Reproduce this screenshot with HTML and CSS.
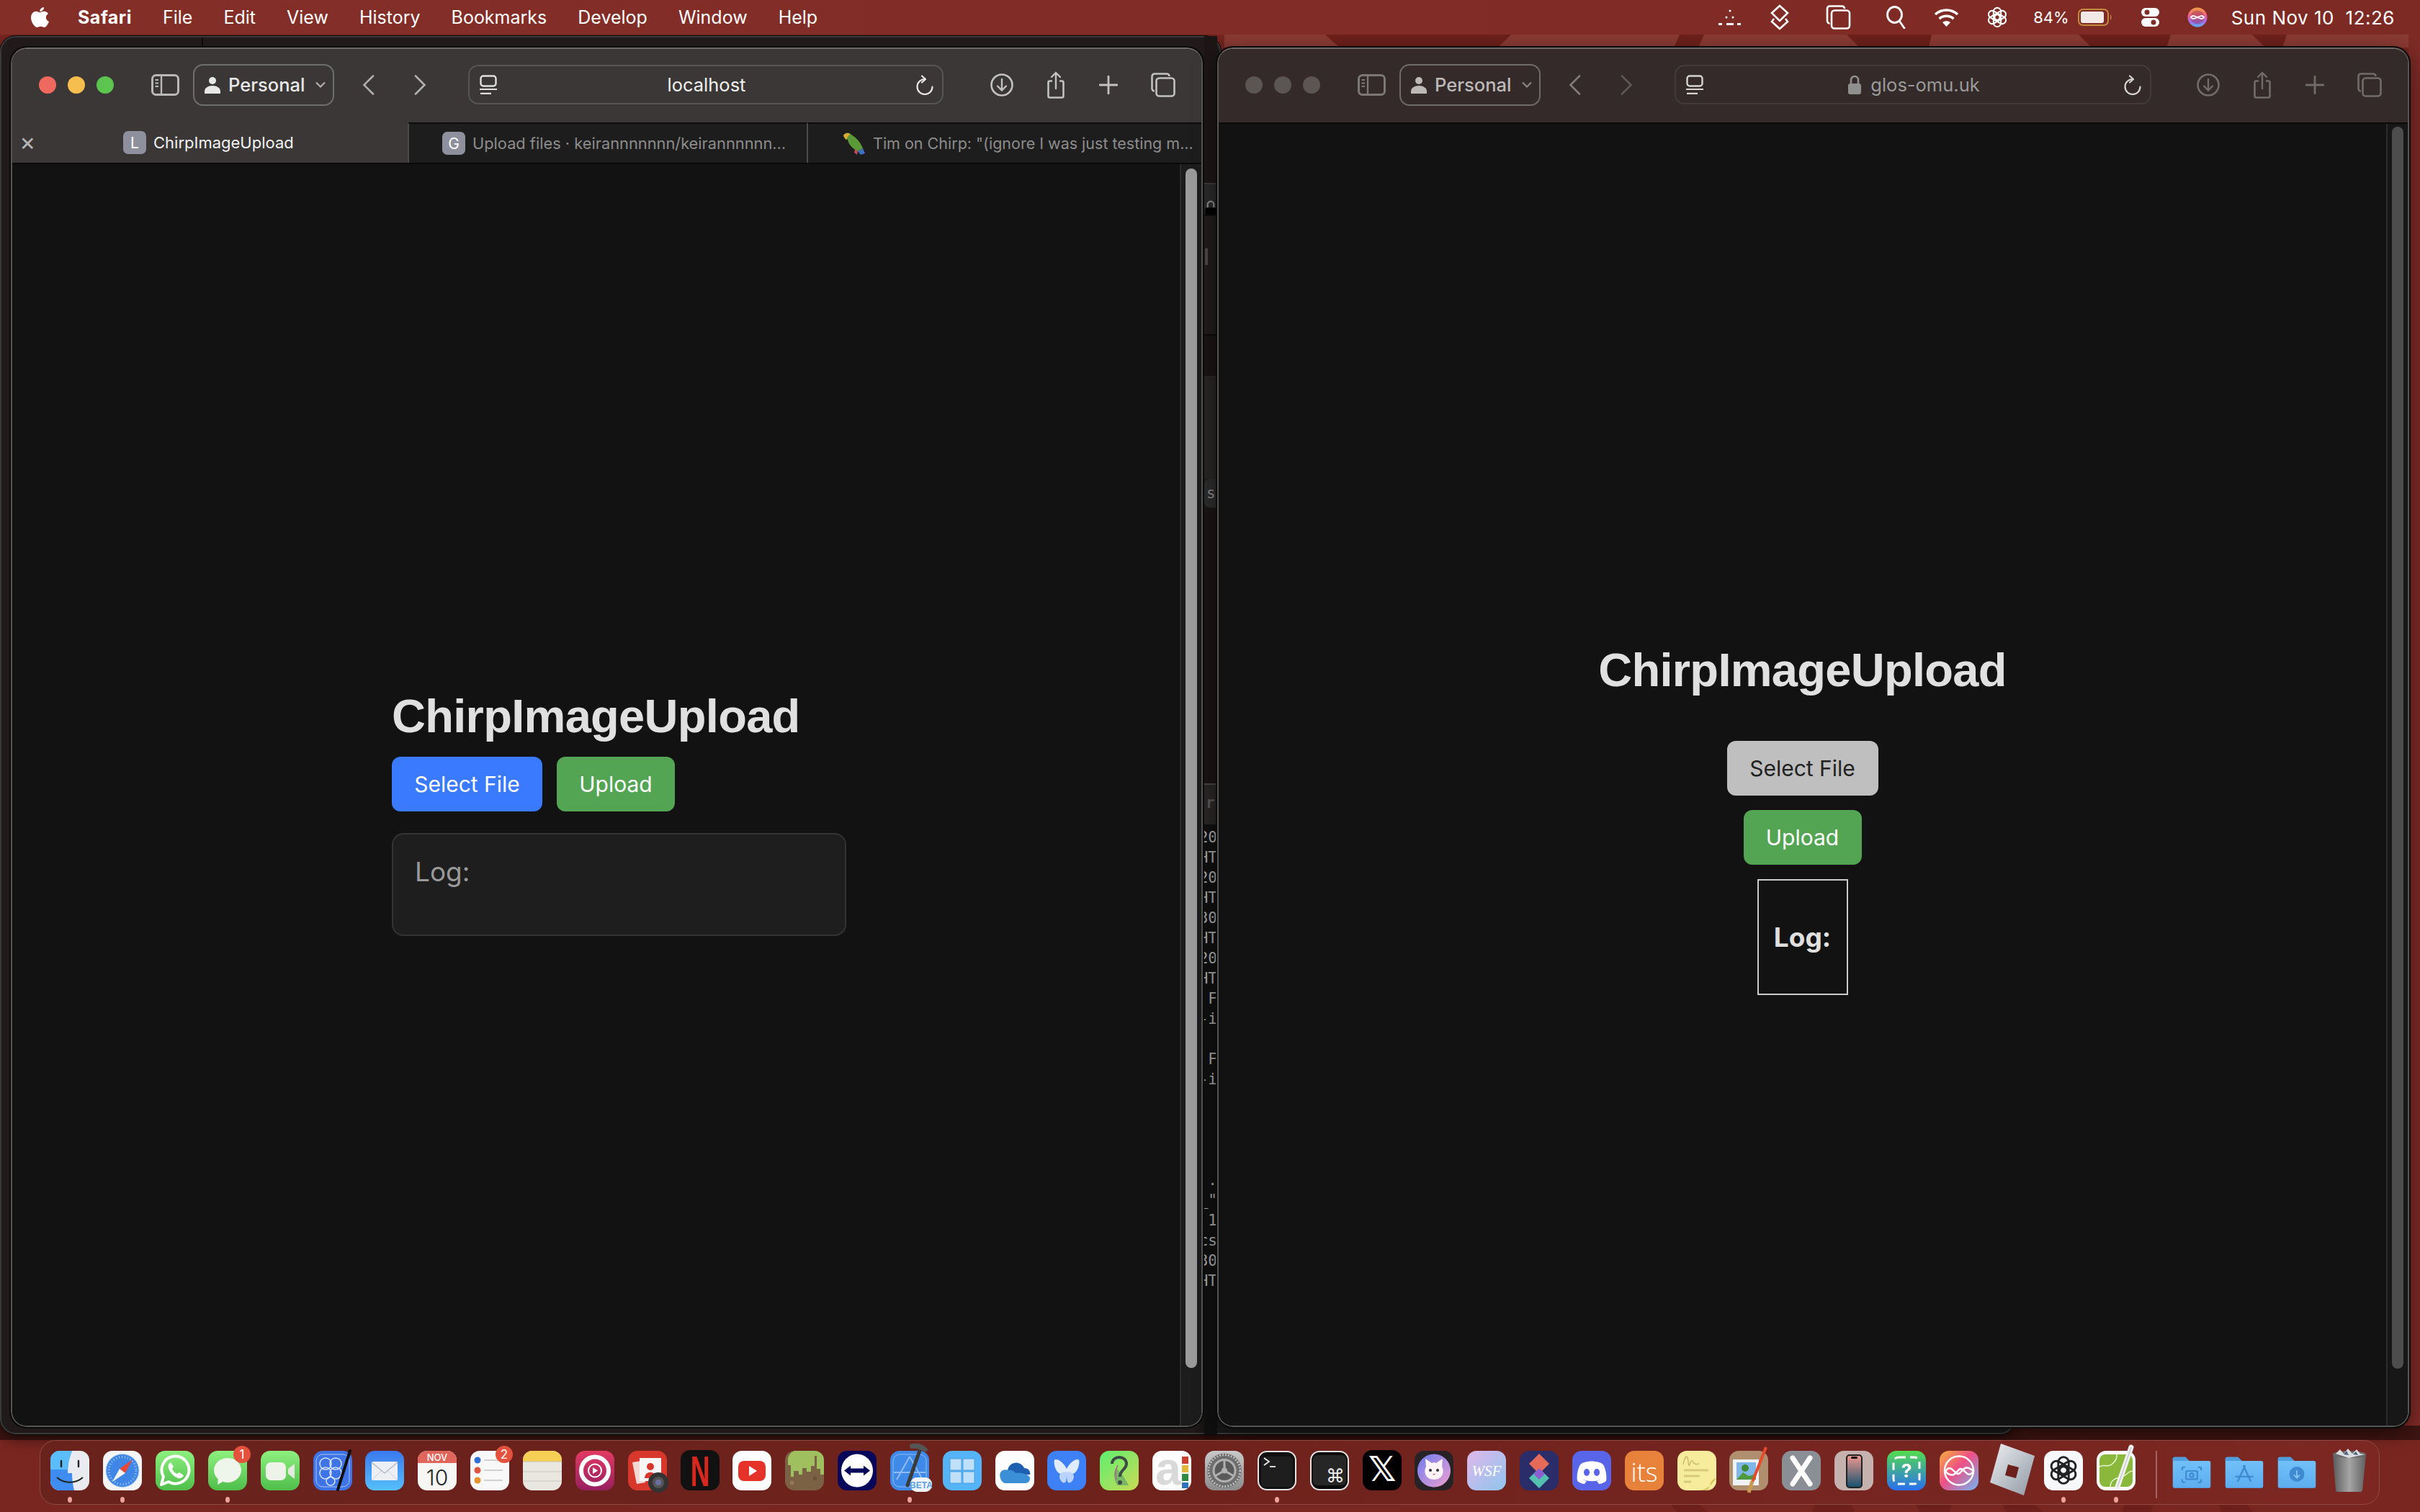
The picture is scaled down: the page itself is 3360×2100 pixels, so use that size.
FILE: index.html
```html
<!DOCTYPE html>
<html lang="en">
<head>
<meta charset="utf-8">
<title>ChirpImageUpload</title>
<link rel="stylesheet" href="styles.css">
</head>
<body class="desktop">

<svg class="sprite" width="0" height="0" aria-hidden="true">
  <defs>
    <linearGradient id="gGreen" x1="0" y1="0" x2="0" y2="1"><stop offset="0" stop-color="#8df07f"/><stop offset="1" stop-color="#4fbe4a"/></linearGradient>
    <linearGradient id="gBlue" x1="0" y1="0" x2="0" y2="1"><stop offset="0" stop-color="#3a78ee"/><stop offset="1" stop-color="#55c0fb"/></linearGradient>
    <linearGradient id="gPink" x1="0" y1="0" x2="0" y2="1"><stop offset="0" stop-color="#e23a63"/><stop offset="1" stop-color="#96205f"/></linearGradient>
    <linearGradient id="gParrot" x1="0" y1="0" x2="1" y2="1"><stop offset="0" stop-color="#5df070"/><stop offset="1" stop-color="#c9d955"/></linearGradient>
    <linearGradient id="gGear" x1="0" y1="0" x2="0" y2="1"><stop offset="0" stop-color="#c9c9c9"/><stop offset="1" stop-color="#8c8c8c"/></linearGradient>
    <linearGradient id="gCat" x1="0" y1="0" x2="1" y2="1"><stop offset="0" stop-color="#6d7cf0"/><stop offset="1" stop-color="#f0a0d0"/></linearGradient>
    <linearGradient id="gWsf" x1="0" y1="0" x2="1" y2="1"><stop offset="0" stop-color="#e0b8ea"/><stop offset="1" stop-color="#8ec5ee"/></linearGradient>
    <linearGradient id="gTips" x1="0" y1="0" x2="0" y2="1"><stop offset="0" stop-color="#54dc4e"/><stop offset="1" stop-color="#2a6ff0"/></linearGradient>
    <linearGradient id="gInf" x1="0" y1="0" x2="1" y2="1"><stop offset="0" stop-color="#f5b03c"/><stop offset=".45" stop-color="#ee4f86"/><stop offset="1" stop-color="#6fb8f5"/></linearGradient>
    <linearGradient id="gSiri" x1="0" y1="0" x2="0" y2="1"><stop offset="0" stop-color="#f0a040"/><stop offset=".4" stop-color="#ee5f8a"/><stop offset=".75" stop-color="#a070f0"/><stop offset="1" stop-color="#50b8f5"/></linearGradient>
    <linearGradient id="gRoblox" x1="0" y1="0" x2="1" y2="1"><stop offset="0" stop-color="#eef0f3"/><stop offset="1" stop-color="#8e97a3"/></linearGradient>
    <linearGradient id="gFolder" x1="0" y1="0" x2="0" y2="1"><stop offset="0" stop-color="#74c3fa"/><stop offset="1" stop-color="#5cadf0"/></linearGradient>
    <linearGradient id="gTrash" x1="0" y1="0" x2="1" y2="0"><stop offset="0" stop-color="#5a5a5a"/><stop offset=".5" stop-color="#a5a5a5"/><stop offset="1" stop-color="#5f5f5f"/></linearGradient>
    <linearGradient id="gPhone" x1="0" y1="0" x2="0" y2="1"><stop offset="0" stop-color="#f49a8e"/><stop offset="1" stop-color="#14506e"/></linearGradient>
    <symbol id="knot" viewBox="0 0 32 32">
      <g fill="none" stroke="currentColor" stroke-width="2.200">
        <rect x="10.500" y="2" width="11" height="18" rx="5.500"/>
        <rect x="10.500" y="2" width="11" height="18" rx="5.500" transform="rotate(60 16 16)"/>
        <rect x="10.500" y="2" width="11" height="18" rx="5.500" transform="rotate(120 16 16)"/>
        <rect x="10.500" y="2" width="11" height="18" rx="5.500" transform="rotate(180 16 16)"/>
        <rect x="10.500" y="2" width="11" height="18" rx="5.500" transform="rotate(240 16 16)"/>
        <rect x="10.500" y="2" width="11" height="18" rx="5.500" transform="rotate(300 16 16)"/>
      </g>
    </symbol>
    <symbol id="i-sidebar" viewBox="0 0 39 30">
      <rect x="1.500" y="1.500" width="36" height="27" rx="5" fill="none" stroke="currentColor" stroke-width="3"/>
      <path d="M14 2v26" stroke="currentColor" stroke-width="2.400"/>
      <path d="M5.500 8h4.500M5.500 12.500h4.500M5.500 17h4.500" stroke="currentColor" stroke-width="1.800"/>
    </symbol>
    <symbol id="i-person" viewBox="0 0 22 24">
      <circle cx="11" cy="6" r="5"/>
      <path d="M0 24v-3c0-5 5-8 11-8s11 3 11 8v3z"/>
    </symbol>
    <symbol id="i-caret" viewBox="0 0 14 9"><path d="M1 1.500 7 7.500l6-6" fill="none" stroke="currentColor" stroke-width="2.200"/></symbol>
    <symbol id="i-back" viewBox="0 0 17 28"><path d="M15 1.500 2.500 14 15 26.500" fill="none" stroke="currentColor" stroke-width="2.600" stroke-linecap="round"/></symbol>
    <symbol id="i-forward" viewBox="0 0 17 28"><path d="M2 1.500 14.500 14 2 26.500" fill="none" stroke="currentColor" stroke-width="2.600" stroke-linecap="round"/></symbol>
    <symbol id="i-page" viewBox="0 0 24 27">
      <rect x="1.500" y="1.500" width="21" height="14" rx="3.500" fill="none" stroke="currentColor" stroke-width="2.400"/>
      <path d="M0 20h24" stroke="currentColor" stroke-width="2"/>
      <path d="M1 26h15" stroke="currentColor" stroke-width="2.400"/>
    </symbol>
    <symbol id="i-reload" viewBox="0 0 24 28">
      <path d="M22.500 16.500A10.500 10.500 0 1 1 12 6" fill="none" stroke="currentColor" stroke-width="2.200" stroke-linecap="round"/>
      <path d="M8 1.500l5 4.500-5 4.500" fill="none" stroke="currentColor" stroke-width="2.200" stroke-linecap="round" stroke-linejoin="round"/>
    </symbol>
    <symbol id="i-download" viewBox="0 0 32 32">
      <circle cx="16" cy="16" r="14.500" fill="none" stroke="currentColor" stroke-width="2.600"/>
      <path d="M16 8v15M10 17.500l6 6 6-6" fill="none" stroke="currentColor" stroke-width="2.400" stroke-linecap="round"/>
    </symbol>
    <symbol id="i-share" viewBox="0 0 24 38">
      <path d="M7 13.500H3.500a2 2 0 0 0-2 2v19a2 2 0 0 0 2 2h17a2 2 0 0 0 2-2v-19a2 2 0 0 0-2-2H17" fill="none" stroke="currentColor" stroke-width="2.600"/>
      <path d="M12 24V2M6 8l6-6 6 6" fill="none" stroke="currentColor" stroke-width="2.400" stroke-linecap="round"/>
    </symbol>
    <symbol id="i-plus" viewBox="0 0 26 26"><path d="M13 1v24M1 13h24" stroke="currentColor" stroke-width="2.800" stroke-linecap="round"/></symbol>
    <symbol id="i-tabs" viewBox="0 0 34 34">
      <path d="M5 25.500H5a3.500 3.500 0 0 1-3.500-3.500V5A3.500 3.500 0 0 1 5 1.500h17A3.500 3.500 0 0 1 25.500 5" fill="none" stroke="currentColor" stroke-width="2.600"/>
      <rect x="7.500" y="7.500" width="25" height="25" rx="4" fill="none" stroke="currentColor" stroke-width="2.600"/>
    </symbol>
    <symbol id="i-lock" viewBox="0 0 20 28">
      <path d="M5 13V7a5 5 0 0 1 10 0v6" fill="none" stroke="currentColor" stroke-width="2.600"/>
      <rect x="1" y="12" width="18" height="15" rx="3"/>
    </symbol>
  </defs>
</svg>

<svg class="wallpaper" viewBox="0 0 3360 2100" aria-hidden="true">
  <rect width="3360" height="2100" fill="#7a2620"/>
  <rect x="1700" y="48" width="1660" height="18" fill="#8a3a34"/>
  <rect x="3344" y="48" width="16" height="1950" fill="#7e2a25"/>
  <g fill="#6d201b">
    <path d="M1840 48h258l-18 18h-220z"/>
    <path d="M2332 48h34l-8 18h-34z"/>
    <path d="M2564 48h118l-4 18h-96z"/>
    <path d="M2886 48h128l-6 18h-104z"/>
    <path d="M3127 48h48l-6 18h-24z"/>
    <path d="M2320 2090h40l12 10h-44zM2520 2090h50l6 10h-60zM2660 2090h50l-4 10h-40zM2780 2090h46l10 10h-50zM2950 2090h40l-4 10h-40zM3080 2090h40l8 10h-44z"/>
  </g>
  <rect x="0" y="1980" width="3360" height="20" fill="#3d1411"/>
</svg>

<header class="menubar">
  <nav class="menu-left">
    <svg class="apple" viewBox="0 0 26 30" aria-hidden="true"><path d="M19 1c.3 3-2.500 6.200-5.700 6C13 4 16 1.200 19 1zM13.300 8.200c1.500 0 3.200-1.400 5.700-1.400 1.400 0 4.300.5 6 3.200-4.700 2.800-3.800 9 1 11-1.200 3.200-4 8-6.500 8-1.800 0-2.800-1.200-5-1.200s-3.400 1.200-5 1.200C6 29 1 21.500 1 15.500 1 9.800 4.700 6.800 8 6.800c2.200 0 4 1.400 5.300 1.400z" fill="#fff"/></svg>
    <span class="menu-app">Safari</span>
    <span>File</span><span>Edit</span><span>View</span><span>History</span><span>Bookmarks</span><span>Develop</span><span>Window</span><span>Help</span>
  </nav>
  <div class="menu-right">
    <svg class="st st-dots" viewBox="0 0 33 26" aria-hidden="true"><g fill="#fff"><circle cx="17" cy="4" r="1.500"/><circle cx="12" cy="13" r="1.500"/><circle cx="21" cy="13" r="1.500"/><rect x="1" y="21" width="5" height="3"/><rect x="12" y="21" width="10" height="3"/><rect x="27" y="21" width="5" height="3"/></g></svg>
    <svg class="st st-layers" viewBox="0 0 26 36" aria-hidden="true"><g fill="none" stroke="#fff" stroke-width="2.600"><path d="M13 2 24 12 13 23 2 12z"/><path d="M5 20 2 24l11 10 11-10-3-4"/></g></svg>
    <svg class="st st-copies" viewBox="0 0 35 34" aria-hidden="true"><use href="#i-tabs" color="#fff"/></svg>
    <svg class="st st-search" viewBox="0 0 27 32" aria-hidden="true"><g fill="none" stroke="#fff" stroke-width="2.800"><ellipse cx="11.500" cy="12.500" rx="10" ry="11"/><path d="M18 21l7 10" stroke-linecap="round"/></g></svg>
    <svg class="st st-wifi" viewBox="0 0 35 28" aria-hidden="true"><g fill="none" stroke="#fff" stroke-width="3.600"><path d="M2 10c9-8 22-8 31 0"/><path d="M7.500 16c6-5 14-5 20 0"/></g><path d="M17.500 27l-5.500-6c3-2.500 8-2.500 11 0z" fill="#fff"/></svg>
    <svg class="st st-gpt" viewBox="0 0 32 32" aria-hidden="true"><use href="#knot" color="#fff"/></svg>
    <span class="st-batt-text">84%</span>
    <svg class="st st-batt" viewBox="0 0 48 24" aria-hidden="true"><rect x="1" y="1" width="41" height="22" rx="6" fill="none" stroke="#c38a3e" stroke-width="2"/><rect x="4" y="4" width="32" height="16" rx="3" fill="#f2e8e6"/><path d="M45 8c2 1 2 7 0 8z" fill="#c38a3e"/></svg>
    <svg class="st st-ctrl" viewBox="0 0 27 28" aria-hidden="true"><g><path d="M7 1h13a6 6 0 0 1 0 12H7A6 6 0 0 1 7 1z" fill="#fff"/><circle cx="9" cy="7" r="3.500" fill="#812c26"/><path d="M7 15h13a6 6 0 0 1 0 12H7a6 6 0 0 1 0-12z" fill="#fff"/><circle cx="18" cy="21" r="3.500" fill="#812c26"/></g></svg>
    <svg class="st st-siri" viewBox="0 0 28 28" aria-hidden="true"><circle cx="14" cy="14" r="13.500" fill="url(#gSiri)"/><circle cx="14" cy="14" r="9.500" fill="#7e2a34" opacity=".35"/><path d="M5 14c4-7 14 7 18 0-4-7-14 7-18 0z" fill="none" stroke="#fff" stroke-width="1.800"/></svg>
    <span class="st-clock">Sun Nov 10&nbsp;&nbsp;12:26</span>
  </div>
</header>

<div class="back-win back-win-a"></div>
<div class="back-win back-win-b"></div>
<div class="back-divider"></div>

<div class="sliver">
  <div class="sl sl-top"></div>
  <div class="sl sl-bar"><svg class="sl-lock" viewBox="0 0 20 28" aria-hidden="true"><use href="#i-lock" color="#8a8a8a"/></svg></div>
  <div class="sl sl-panel"><i class="sl-mark"></i></div>
  <div class="sl sl-dark"></div>
  <div class="sl sl-mid"></div>
  <div class="sl sl-chip"><span>s</span></div>
  <div class="sl sl-long"></div>
  <div class="sl sl-head"><span>r</span></div>
  <div class="sl sl-term">
    <p>20</p><p>HT</p><p>20</p><p>HT</p><p>30</p><p>HT</p><p>20</p><p>HT</p><p> F</p><p>-i</p><p></p><p> F</p><p>-i</p><p></p><p></p><p></p><p></p><p> .</p><p>_"</p><p> 1</p><p>cs</p><p>30</p><p>HT</p>
  </div>
</div>

<!-- Left Safari window -->
<section class="win win-left">
  <div class="toolbar">
    <div class="lights"><i class="light red"></i><i class="light yellow"></i><i class="light green"></i></div>
    <svg class="tb-sidebar"><use href="#i-sidebar"/></svg>
    <div class="profile"><svg class="profile-person"><use href="#i-person"/></svg><span>Personal</span><svg class="profile-caret"><use href="#i-caret"/></svg></div>
    <svg class="tb-back"><use href="#i-back"/></svg>
    <svg class="tb-forward"><use href="#i-forward"/></svg>
    <div class="urlbar">
      <svg class="url-page"><use href="#i-page"/></svg>
      <div class="url-text">localhost</div>
      <svg class="url-reload"><use href="#i-reload"/></svg>
    </div>
    <svg class="tb-download"><use href="#i-download"/></svg>
    <svg class="tb-share"><use href="#i-share"/></svg>
    <svg class="tb-plus"><use href="#i-plus"/></svg>
    <svg class="tb-tabs"><use href="#i-tabs"/></svg>
  </div>
  <div class="tabs">
    <div class="tab tab-active">
      <span class="tab-close">×</span>
      <span class="favicon">L</span><span class="tab-title">ChirpImageUpload</span>
    </div>
    <div class="tab tab-two"><span class="favicon">G</span><span class="tab-title">Upload files · keirannnnnnn/keirannnnnn...</span></div>
    <div class="tab tab-three">
      <svg class="parrot" viewBox="0 0 32 32" aria-hidden="true"><path d="M1 5c2-4 8-5 11-1 7 4 13 11 16 19l-7 4C13 23 8 17 7 11L3 10z" fill="#5c9a38"/><path d="M1 6c1-4 6-5 9-3L7 7 5 11z" fill="#e0a830"/><path d="M21 27l7-4 3 7-6 2z" fill="#3f6fc0"/><path d="M17 24l4 3-1 5-4-3z" fill="#c04a5a"/></svg>
      <span class="tab-title">Tim on Chirp: "(ignore I was just testing m...</span>
    </div>
  </div>
  <div class="content content-left">
    <main class="page-left">
      <h1 class="app-title">ChirpImageUpload</h1>
      <div class="btn-row">
        <button class="btn btn-blue">Select File</button>
        <button class="btn btn-green">Upload</button>
      </div>
      <div class="log-card">Log:</div>
    </main>
    <div class="scroller scroller-left"><i class="thumb"></i></div>
  </div>
</section>

<!-- Right Safari window -->
<section class="win win-right">
  <div class="toolbar toolbar-dim">
    <div class="lights"><i class="light off"></i><i class="light off"></i><i class="light off"></i></div>
    <svg class="tb-sidebar"><use href="#i-sidebar"/></svg>
    <div class="profile"><svg class="profile-person"><use href="#i-person"/></svg><span>Personal</span><svg class="profile-caret"><use href="#i-caret"/></svg></div>
    <svg class="tb-back"><use href="#i-back"/></svg>
    <svg class="tb-forward tb-disabled"><use href="#i-forward"/></svg>
    <div class="urlbar">
      <svg class="url-page"><use href="#i-page"/></svg>
      <div class="url-text url-secure"><svg class="url-lock"><use href="#i-lock"/></svg>glos-omu.uk</div>
      <svg class="url-reload"><use href="#i-reload"/></svg>
    </div>
    <svg class="tb-download"><use href="#i-download"/></svg>
    <svg class="tb-share"><use href="#i-share"/></svg>
    <svg class="tb-plus"><use href="#i-plus"/></svg>
    <svg class="tb-tabs"><use href="#i-tabs"/></svg>
  </div>
  <div class="content content-right">
    <main class="page-right">
      <h1 class="app-title">ChirpImageUpload</h1>
      <button class="btn btn-grey">Select File</button>
      <button class="btn btn-green">Upload</button>
      <div class="log-plain">Log:</div>
    </main>
    <div class="scroller scroller-right"><i class="thumb"></i></div>
  </div>
</section>

<!-- Dock -->
<footer class="dock">
  <div class="app"><svg class="ico" viewBox="0 0 56 56"><rect x="1" y="0" width="54" height="55" rx="13" fill="#e9ebf0"/><path d="M14 0h17c-4 10-6 20-6 31h6c0 8 1 16 3 24H14A13 13 0 0 1 1 42V13A13 13 0 0 1 14 0z" fill="#3f8df0"/><path d="M15 0h16c-4 10-6 20-6 26H1V13A13 13 0 0 1 15 0z" fill="#5bbdf9"/><path d="M16 14v8M40 14v8" stroke="#222" stroke-width="2.400" stroke-linecap="round"/><path d="M10 37c10 9 26 9 36 0" fill="none" stroke="#222" stroke-width="2"/></svg><i class="dot"></i></div>

  <div class="app"><svg class="ico" viewBox="0 0 56 56"><rect x="1" y="0" width="54" height="55" rx="13" fill="#f5f5f5"/><circle cx="28" cy="27.500" r="23" fill="#3f86e6" stroke="#b9d4f0"/><circle cx="28" cy="27.500" r="19" fill="none" stroke="#a9cdf5" stroke-width="3" stroke-dasharray="1 3"/><path d="M42 12 24 25l8 6z" fill="#e8483a"/><path d="M14 43l18-12-8-6z" fill="#f4f4f4"/></svg><i class="dot"></i></div>

  <div class="app"><svg class="ico" viewBox="0 0 56 56"><rect x="1" y="0" width="54" height="55" rx="13" fill="url(#gGreen)"/><path d="M9 47l3-11a19 19 0 1 1 7 7z" fill="none" stroke="#fff" stroke-width="4" stroke-linejoin="round"/><path d="M21 17c-3 2-3 6-1 10 3 5 7 9 12 11 4 1 7-1 8-4l-6-4-3 2c-3-1-6-4-7-7l2-3-4-6z" fill="#fff"/></svg></div>

  <div class="app"><svg class="ico" viewBox="0 0 56 56"><rect x="1" y="0" width="54" height="55" rx="13" fill="url(#gGreen)"/><ellipse cx="28" cy="27" rx="19" ry="17" fill="#eef5ea"/><path d="M15 38l-1 9 9-5z" fill="#eef5ea"/><circle cx="48" cy="5" r="12" fill="#e4513c"/><text class="badge-text" x="48" y="11">1</text></svg><i class="dot"></i></div>

  <div class="app"><svg class="ico" viewBox="0 0 56 56"><rect x="1" y="0" width="54" height="55" rx="13" fill="url(#gGreen)"/><rect x="8" y="16" width="28" height="25" rx="7" fill="#eef3ea"/><path d="M39 25l9-7v21l-9-7z" fill="#e3ebdf"/></svg></div>

  <div class="app"><svg class="ico" viewBox="0 0 56 56"><rect x="1" y="0" width="54" height="55" rx="13" fill="#3e74e6"/><rect x="5" y="5" width="46" height="45" rx="9" fill="none" stroke="#a9c6f5" stroke-width="1"/><g fill="none" stroke="#d6e4fa" stroke-width="1.500"><circle cx="18" cy="18" r="8"/><circle cx="32" cy="18" r="8"/><circle cx="18" cy="31" r="8"/><circle cx="32" cy="31" r="8"/><circle cx="25" cy="42" r="6"/></g><path d="M52 0 35 54" stroke="#0d0d0d" stroke-width="4" stroke-linecap="round"/></svg></div>

  <div class="app"><svg class="ico" viewBox="0 0 56 56"><rect x="1" y="0" width="54" height="55" rx="13" fill="url(#gBlue)"/><rect x="10" y="15" width="36" height="26" rx="2" fill="#eceff3"/><path d="M10 16l18 15 18-15" fill="none" stroke="#b9bec6" stroke-width="1.500"/><path d="M10 41l13-13M46 41L33 28" stroke="#c9ced6" stroke-width="1"/></svg></div>

  <div class="app"><svg class="ico" viewBox="0 0 56 56"><rect x="1" y="0" width="54" height="55" rx="13" fill="#f6f6f4"/><path d="M1 17V13A13 13 0 0 1 14 0h28a13 13 0 0 1 13 13v4z" fill="#e0655a"/><text class="cal-month" x="28" y="14">NOV</text><text class="cal-day" x="28" y="48">10</text></svg></div>

  <div class="app"><svg class="ico" viewBox="0 0 56 56"><rect x="1" y="0" width="54" height="55" rx="13" fill="#f8f8f8"/><circle cx="11" cy="13" r="4.500" fill="#2e6fd8"/><circle cx="11" cy="27" r="4.500" fill="#e0533f"/><circle cx="11" cy="41" r="4.500" fill="#e5912d"/><path d="M20 13h26M20 27h26M20 41h26" stroke="#c4c4c4" stroke-width="1.500"/><circle cx="48" cy="5" r="12" fill="#e4513c"/><text class="badge-text" x="48" y="11">2</text></svg></div>

  <div class="app"><svg class="ico" viewBox="0 0 56 56"><rect x="1" y="0" width="54" height="55" rx="13" fill="#e9e7e0"/><path d="M1 15V13A13 13 0 0 1 14 0h28a13 13 0 0 1 13 13v2z" fill="#f8cf55"/><path d="M1 29h54M1 42h54" stroke="#d4d2cb" stroke-width="1.500"/><path d="M1 15h54" stroke="#c6c2b4" stroke-width="2" stroke-dasharray="1 1"/></svg></div>

  <div class="app"><svg class="ico" viewBox="0 0 56 56"><rect x="1" y="0" width="54" height="55" rx="13" fill="url(#gPink)"/><circle cx="28" cy="27.500" r="19" fill="none" stroke="#fff" stroke-width="6"/><circle cx="28" cy="27.500" r="9" fill="none" stroke="#fff" stroke-width="2"/><path d="M25 23l7 4.500-7 4.500z" fill="#fff"/></svg></div>

  <div class="app"><svg class="ico" viewBox="0 0 56 56"><rect x="1" y="0" width="54" height="55" rx="13" fill="#d8372c"/><path d="M7 16l13-2 5 30-12 2z" fill="#f3d7d2"/><rect x="17" y="10" width="30" height="32" fill="#f6f6f6"/><circle cx="32" cy="22" r="5" fill="#d8372c"/><path d="M24 38c0-11 16-11 16 0z" fill="#d8372c"/><circle cx="43" cy="44" r="14" fill="#333"/><circle cx="43" cy="44" r="8" fill="#555"/><circle cx="43" cy="44" r="4" fill="#6d6f9e"/></svg></div>

  <div class="app"><svg class="ico" viewBox="0 0 56 56"><rect x="1" y="-1" width="54" height="56" rx="13" fill="#111"/><text class="netflix" x="28" y="49" transform="translate(28 0) scale(.62 1) translate(-28 0)">N</text></svg></div>

  <div class="app"><svg class="ico" viewBox="0 0 56 56"><rect x="1" y="0" width="54" height="55" rx="13" fill="#fdfdfd"/><rect x="9" y="14" width="38" height="28" rx="8" fill="#e5332a"/><path d="M24 21l11 7-11 7z" fill="#fff"/></svg></div>

  <div class="app"><svg class="ico" viewBox="0 0 56 56"><rect x="1" y="0" width="54" height="55" rx="13" fill="#7c6244"/><path d="M14 0h28a13 13 0 0 1 13 13v20h-5v-8h-5v-18h-3v14h-5v8h-6v-5h-6v9h-5v-5h-7v8h-4V20h-4V13A13 13 0 0 1 14 0z" fill="#a0c060"/><rect x="8" y="42" width="5" height="5" fill="#94785a"/><rect x="40" y="36" width="5" height="5" fill="#6a5238"/></svg></div>

  <div class="app"><svg class="ico" viewBox="0 0 56 56"><rect x="1" y="0" width="54" height="55" rx="13" fill="#07085a"/><ellipse cx="28" cy="27.500" rx="22" ry="23" fill="#fff"/><path d="M10 27.500l9-7v4h18v-4l9 7-9 7v-4H19v4z" fill="#07085a"/></svg></div>

  <div class="app"><svg class="ico" viewBox="0 0 56 56"><rect x="1" y="0" width="54" height="55" rx="13" fill="#3f8ae8"/><rect x="5" y="5" width="46" height="45" rx="9" fill="none" stroke="#8fbdf2"/><path d="M10 40 28 8M46 40 28 8M6 30h44" stroke="#8fbdf2" stroke-width="2" fill="none"/><path d="M44 -6 25 48" stroke="#3b3b3b" stroke-width="5" stroke-linecap="round"/><path d="M28 -9c10-3 20 0 26 8l-5 3c-6-4-12-6-20-5z" fill="#555"/><rect x="29" y="37" width="30" height="20" rx="9" fill="#f1f4f8"/><text class="beta" x="44" y="52">BETA</text></svg><i class="dot"></i></div>

  <div class="app"><svg class="ico" viewBox="0 0 56 56"><rect x="1" y="0" width="54" height="55" rx="13" fill="#55b4f8"/><g fill="#bfe0f9" stroke="#4f9fdf"><rect x="11" y="11" width="16" height="16"/><rect x="29" y="11" width="16" height="16"/><rect x="11" y="29" width="16" height="16"/><rect x="29" y="29" width="16" height="16"/></g></svg></div>

  <div class="app"><svg class="ico" viewBox="0 0 56 56"><rect x="1" y="0" width="54" height="55" rx="13" fill="#fdfdfd"/><path d="M18 27a12 12 0 0 1 23-3c7 0 9 6 8 9H20z" fill="#1d5fb0"/><path d="M8 38c-3-9 4-14 11-11 2-1 8 0 10 4 6-2 20 2 20 7 0 5-3 7-7 7H15c-3 0-6-3-7-7z" fill="#3a8fd6"/></svg></div>

  <div class="app"><svg class="ico" viewBox="0 0 56 56"><rect x="1" y="0" width="54" height="55" rx="13" fill="#3e80f5"/><path d="M28 25C24 17 17 11 12 12c-3 1-1 13 4 18 3 3 8 3 12 0zM28 25c4-8 11-14 16-13 3 1 1 13-4 18-3 3-8 3-12 0z" fill="#e0ecfc"/><path d="M28 30c-3-2-10 0-10 6 0 5 5 10 8 8 2-2 2-9 2-14zM28 30c3-2 10 0 10 6 0 5-5 10-8 8-2-2-2-9-2-14z" fill="#b9d3fa"/></svg></div>

  <div class="app"><svg class="ico" viewBox="0 0 56 56"><rect x="1" y="0" width="54" height="55" rx="13" fill="url(#gParrot)"/><path d="M23 24c6 4 13 14 18 24l-16 0c-4-8-6-16-2-24z" fill="#6aa868" opacity=".75"/><path d="M18 18c0-12 20-12 20 0 0 8-9 8-9 18" fill="none" stroke="#3d4a45" stroke-width="4"/><path d="M24 40c-2-6-1-14 2-20" fill="none" stroke="#c05a8a" stroke-width="1.500"/><circle cx="29" cy="44" r="3" fill="#3d4a45"/></svg></div>

  <div class="app"><svg class="ico" viewBox="0 0 56 56"><rect x="1" y="0" width="54" height="55" rx="13" fill="#fdfdfd"/><text class="a-mark" x="23" y="47">a</text><rect x="42" y="8" width="9" height="10" fill="#c9402f"/><rect x="42" y="20" width="9" height="10" fill="#e3b73c"/><rect x="42" y="32" width="9" height="10" fill="#2e8b43"/><rect x="42" y="44" width="9" height="8" fill="#2e73c0"/></svg></div>

  <div class="app"><svg class="ico" viewBox="0 0 56 56"><rect x="1" y="0" width="54" height="55" rx="13" fill="url(#gGear)"/><circle cx="28" cy="27.500" r="24" fill="#6e6e6e"/><circle cx="28" cy="27.500" r="22" fill="none" stroke="#bdbdbd" stroke-width="3" stroke-dasharray="2 2"/><circle cx="28" cy="27.500" r="15" fill="#5a5a5a" stroke="#b0b0b0" stroke-width="3"/><circle cx="28" cy="27.500" r="4" fill="#b0b0b0"/><path d="M28 27.500V13M28 27.500l12 7M28 27.500l-12 7" stroke="#b0b0b0" stroke-width="3"/></svg></div>

  <div class="app"><svg class="ico" viewBox="0 0 56 56"><rect x="1" y="0" width="54" height="55" rx="13" fill="#e5e5e5"/><rect x="3" y="2" width="50" height="51" rx="11" fill="#111"/><rect x="6" y="8" width="44" height="42" rx="5" fill="#1e1e1e"/><path d="M10 10l7 5-7 5" fill="none" stroke="#eee" stroke-width="1.800"/><path d="M18 22h8" stroke="#eee" stroke-width="1.800"/></svg><i class="dot"></i></div>

  <div class="app"><svg class="ico" viewBox="0 0 56 56"><rect x="1" y="0" width="54" height="55" rx="13" fill="#e5e5e5"/><rect x="3" y="2" width="50" height="51" rx="11" fill="#0c0c0c"/><rect x="5" y="6" width="46" height="42" rx="6" fill="#262626"/><text class="cmd" x="36" y="44">⌘</text></svg></div>

  <div class="app"><svg class="ico" viewBox="0 0 56 56"><rect x="1" y="-1" width="54" height="56" rx="13" fill="#000"/><text class="x-mark" x="28" y="42">𝕏</text></svg></div>

  <div class="app"><svg class="ico" viewBox="0 0 56 56"><rect x="1" y="0" width="54" height="55" rx="13" fill="#262226"/><circle cx="28" cy="27.500" r="23" fill="url(#gCat)"/><path d="M17 22l-1-11 9 6c2-1 4-1 6 0l9-6-1 11c4 7 1 18-11 18s-15-11-11-18z" fill="#fbf3f5"/><circle cx="23" cy="27" r="2" fill="#333"/><circle cx="33" cy="27" r="2" fill="#333"/><path d="M26 32h4l-2 2z" fill="#d06070"/></svg></div>

  <div class="app"><svg class="ico" viewBox="0 0 56 56"><rect x="1" y="0" width="54" height="55" rx="13" fill="url(#gWsf)"/><text class="wsf" x="28" y="35">WSF</text></svg></div>

  <div class="app"><svg class="ico" viewBox="0 0 56 56"><rect x="1" y="0" width="54" height="55" rx="13" fill="#2b2c6a"/><path d="M28 24 42 38 28 52 14 38z" fill="#53c0b0"/><path d="M28 4 42 18 28 32 14 18z" fill="#e56a58"/><path d="M28 24l8 8-8 8-8-8z" fill="#8c5fd0"/></svg></div>

  <div class="app"><svg class="ico" viewBox="0 0 56 56"><rect x="1" y="0" width="54" height="55" rx="13" fill="#5865e8"/><path d="M18 16c7-2 13-2 20 0 4 1 6 3 7 5 3 7 4 14 3 21-3 2-6 4-10 4l-3-4c2-.5 3-1 5-2-7 3-15 3-24 0 2 1 3 1.500 5 2l-3 4c-4 0-7-2-10-4-1-7 0-14 3-21 1-2 3-4 7-5z" fill="#fff"/><ellipse cx="21" cy="30" rx="4" ry="5" fill="#5865e8"/><ellipse cx="35" cy="30" rx="4" ry="5" fill="#5865e8"/></svg></div>

  <div class="app"><svg class="ico" viewBox="0 0 56 56"><rect x="1" y="0" width="54" height="55" rx="13" fill="#e8823a"/><text class="its" x="28" y="43">its</text></svg></div>

  <div class="app"><svg class="ico" viewBox="0 0 56 56"><rect x="1" y="0" width="54" height="55" rx="13" fill="#f6ec9c"/><path d="M55 38c-5 1-8 5-9 10-1 3-2 7-6 7h-9c12-1 17-8 24-17z" fill="#d9c05c"/><path d="M9 19c3-14 6-14 7-4s2 4 3 1 3-3 4 0 4 3 8 2" fill="none" stroke="#cdbb6a" stroke-width="1.500"/><path d="M10 27h34M10 35h22M10 43h10" stroke="#d9ca7a" stroke-width="3"/></svg></div>

  <div class="app"><svg class="ico" viewBox="0 0 56 56"><rect x="1" y="0" width="54" height="55" rx="13" fill="#b08f6e"/><rect x="6" y="12" width="36" height="36" fill="#eef2f6"/><rect x="11" y="16" width="27" height="24" fill="#7fb8e8"/><path d="M11 40l9-10 8 5 10-3v8z" fill="#4f9a3f"/><circle cx="23" cy="24" r="5" fill="#3f8a3a"/><path d="M52 -5 32 46" stroke="#e64a2a" stroke-width="4"/><path d="M33 42 28 58" stroke="#c99a50" stroke-width="5"/></svg></div>

  <div class="app"><svg class="ico" viewBox="0 0 56 56"><rect x="1" y="0" width="54" height="55" rx="13" fill="#8a8f96"/><path d="M16 10l24 36M40 10 16 46" stroke="#fff" stroke-width="7" stroke-linecap="round"/></svg></div>

  <div class="app"><svg class="ico" viewBox="0 0 56 56"><rect x="1" y="0" width="54" height="55" rx="13" fill="#c5b1ae"/><rect x="18" y="6" width="21" height="45" rx="4" fill="url(#gPhone)" stroke="#222" stroke-width="2"/><rect x="24" y="8" width="9" height="3" rx="1.500" fill="#111"/></svg></div>

  <div class="app"><svg class="ico" viewBox="0 0 56 56"><rect x="1" y="0" width="54" height="55" rx="13" fill="url(#gTips)"/><rect x="10" y="9" width="36" height="37" rx="7" fill="none" stroke="#fff" stroke-width="3" stroke-dasharray="10 6"/><text class="tips-q" x="28" y="37">?</text></svg></div>

  <div class="app"><svg class="ico" viewBox="0 0 56 56"><rect x="1" y="0" width="54" height="55" rx="13" fill="url(#gInf)"/><circle cx="28" cy="27.500" r="20" fill="none" stroke="#fff" stroke-width="2.500"/><path d="M9 29c8-14 14 8 20 2s8-12 19-3c-8 14-14-8-20-2s-8 12-19 3z" fill="none" stroke="#fff" stroke-width="2.500"/></svg></div>

  <div class="app"><svg class="ico" viewBox="0 0 56 56"><path d="M13 -10 60 7 45 62-2 44z" fill="url(#gRoblox)"/><path d="M23 19l15 4-4 15-15-4z" fill="#6a211c"/></svg></div>

  <div class="app"><svg class="ico" viewBox="0 0 56 56"><rect x="1" y="0" width="54" height="55" rx="13" fill="#f7f8fa"/><svg x="7" y="6" width="42" height="42" viewBox="0 0 32 32"><use href="#knot" color="#222"/></svg></svg><i class="dot"></i></div>

  <div class="app"><svg class="ico" viewBox="0 0 56 56"><rect x="1" y="0" width="54" height="55" rx="13" fill="#fdfdfd"/><rect x="5" y="5" width="46" height="45" rx="8" fill="#8ab83a"/><path d="M5 22c8-4 12 2 18-4s6-8 6-13M20 50c0-10 8-12 16-14s8-8 15-8" fill="none" stroke="#e8f3cf" stroke-width="1.500"/><path d="M49 -5 30 50" stroke="#f0f0f0" stroke-width="7" stroke-linecap="round"/><path d="M49 -5 30 50" stroke="#bbb" stroke-width="1"/></svg><i class="dot"></i></div>

  <div class="dock-sep"></div>

  <div class="app"><svg class="ico" viewBox="0 0 64 56"><path d="M2 9a3 3 0 0 1 3-3h17l6 6h31a3 3 0 0 1 3 3v37a3 3 0 0 1-3 3H5a3 3 0 0 1-3-3z" fill="url(#gFolder)"/><path d="M2 9a3 3 0 0 1 3-3h17l6 6H2z" fill="#4f9fe0"/><g fill="none" stroke="#3f8ad0" stroke-width="2.500"><path d="M22 22h-3a2 2 0 0 0-2 2v3M42 22h3a2 2 0 0 1 2 2v3M22 46h-3a2 2 0 0 1-2-2v-3M42 46h3a2 2 0 0 0 2-2v-3"/><rect x="23" y="28" width="18" height="13" rx="2"/><circle cx="32" cy="34.500" r="3"/></g></svg></div>
  <div class="app"><svg class="ico" viewBox="0 0 64 56"><path d="M2 9a3 3 0 0 1 3-3h17l6 6h31a3 3 0 0 1 3 3v37a3 3 0 0 1-3 3H5a3 3 0 0 1-3-3z" fill="url(#gFolder)"/><path d="M2 9a3 3 0 0 1 3-3h17l6 6H2z" fill="#4f9fe0"/><path d="M33 20 22 44M31 20l11 24M19 37h26" fill="none" stroke="#3f8ad0" stroke-width="2.800" stroke-linecap="round"/></svg></div>
  <div class="app"><svg class="ico" viewBox="0 0 64 56"><path d="M2 9a3 3 0 0 1 3-3h17l6 6h31a3 3 0 0 1 3 3v37a3 3 0 0 1-3 3H5a3 3 0 0 1-3-3z" fill="url(#gFolder)"/><path d="M2 9a3 3 0 0 1 3-3h17l6 6H2z" fill="#4f9fe0"/><circle cx="32" cy="33" r="12" fill="#3f8ad0"/><path d="M32 27v12M27.500 34.500l4.500 4.500 4.500-4.500" fill="none" stroke="#8cc8f8" stroke-width="2"/></svg></div>
  <div class="app"><svg class="ico" viewBox="0 0 56 56"><path d="M5 6h46l-5 49a3 3 0 0 1-3 2H12a3 3 0 0 1-3-2z" fill="url(#gTrash)"/><ellipse cx="28" cy="5" rx="23" ry="5" fill="#6a6a6a"/><path d="M9 4l6-6 5 6 6-7 6 7 6-6 5 6 6 1-22 5z" fill="#d9dde2"/><path d="M20 5l4-5 3 6zM33 5l4-4 3 5z" fill="#50607a"/></svg></div>
</footer>

</body>
</html>
```

FILE: styles.css
```css
* { box-sizing: border-box; }

html, body { margin: 0; padding: 0; }

.desktop {
  position: relative;
  width: 3360px;
  height: 2100px;
  overflow: hidden;
  background: #7a2620;
  font-family: Inter, "Liberation Sans", sans-serif;
}

.sprite { position: absolute; }
.wallpaper { position: absolute; left: 0; top: 0; width: 3360px; height: 2100px; }

/* ---------- menu bar ---------- */
.menubar {
  position: relative;
  z-index: 5;
  height: 48px;
  background: linear-gradient(90deg, #842e28, #7e2a24);
  display: flex;
  justify-content: space-between;
  align-items: center;
  color: #fff;
  font-size: 25px;
  padding: 0 35px 0 42px;
}

.menu-left { display: flex; align-items: center; gap: 43px; }
.apple { width: 26px; height: 30px; margin-right: -3px; }
.menu-app { font-weight: 700; letter-spacing: .5px; }
.menu-right { display: flex; align-items: center; }

.st { display: block; flex: none; }
.st-dots { width: 33px; height: 26px; }
.st-layers { width: 26px; height: 36px; margin-left: 40px; }
.st-copies { width: 35px; height: 34px; margin-left: 51px; }
.st-search { width: 27px; height: 32px; margin-left: 49px; }
.st-wifi { width: 35px; height: 28px; margin-left: 39px; }
.st-gpt { width: 30px; height: 32px; margin-left: 38px; }
.st-batt-text { font-size: 22px; margin-left: 35px; }
.st-batt { width: 48px; height: 24px; margin-left: 12px; }
.st-ctrl { width: 27px; height: 28px; margin-left: 39px; }
.st-siri { width: 28px; height: 32px; margin-left: 38px; }
.st-clock { margin-left: 33px; font-size: 26px; letter-spacing: .5px; }

/* ---------- windows behind ---------- */
.back-win {
  position: absolute;
  background: #201a1a;
  border: 2px solid #3a3a3a;
  box-shadow: 0 0 0 1px #0b0b0b, 0 6px 20px rgba(0, 0, 0, .55);
}
.back-win-a { left: 0; top: 50px; width: 1695px; height: 1942px; border-radius: 22px; }
.back-win-b { left: 1673px; top: 1800px; width: 1124px; height: 192px; border-radius: 0 0 20px 0; background: #1a1a1a; }
.back-divider { position: absolute; left: 280px; top: 52px; width: 2px; height: 14px; background: #0c0c0c; }

.sliver {
  position: absolute;
  left: 1672px;
  top: 50px;
  width: 18px;
  height: 1942px;
  display: flex;
  flex-direction: column;
  overflow: hidden;
  font-family: "DejaVu Sans Mono", monospace;
  color: #a8a8a8;
  font-size: 21px;
}
.sl { flex: none; position: relative; overflow: hidden; }
.sl-top { height: 204px; background: #1e1616; }
.sl-bar { height: 46px; background: #2a2a2a; border-top: 2px solid #3a3a3a; border-bottom: 2px solid #0e0e0e; }
.sl-lock { position: absolute; left: 0; top: 22px; width: 18px; height: 24px; }
.sl-panel { height: 164px; background: #221c1c; }
.sl-mark { position: absolute; left: 1px; top: 45px; width: 4px; height: 23px; background: #4d4848; }
.sl-dark { height: 58px; background: #1c1414; border-top: 2px solid #0a0a0a; }
.sl-mid { height: 143px; background: #282424; }
.sl-chip { height: 40px; background: #2c2c2c; line-height: 40px; padding-left: 3px; border-radius: 8px 0 0 8px; color: #8a8a8a; }
.sl-long { height: 383px; background: #1c1414; }
.sl-head { height: 57px; background: #2a2626; border-top: 2px solid #4a4545; color: #5b5555; line-height: 50px; font-weight: 700; padding-left: 2px; }
.sl-term { height: 847px; background: #101010; padding-top: 4px; }
.sl-term p {
  margin: 0;
  height: 28px;
  line-height: 28px;
  white-space: pre;
  display: flex;
  justify-content: flex-end;
}

/* ---------- safari window ---------- */
.win {
  position: absolute;
  top: 66px;
  width: 1655px;
  height: 1916px;
  border-radius: 22px;
  overflow: hidden;
  background: #121212;
  border: 2px solid #555;
  border-top-color: #6d6a69;
  outline: 2px solid #0b0b0b;
  z-index: 2;
  display: flex;
  flex-direction: column;
}
.win-left { left: 15px; }
.win-right { left: 1690px; z-index: 3; box-shadow: 0 8px 30px rgba(0, 0, 0, .5); }

.toolbar {
  flex: none;
  height: 102px;
  background: #3a3736;
  display: flex;
  align-items: center;
  padding: 0 0 3px 37px;
  color: #b9b9b9;
}
.toolbar svg { display: block; flex: none; }

.lights { display: flex; gap: 16px; }
.light { display: block; width: 24px; height: 24px; border-radius: 50%; }
.red { background: #f0695f; }
.yellow { background: #f6bd4f; }
.green { background: #5cc550; }
.off { background: #5b5554; }

.tb-sidebar { width: 39px; height: 30px; margin-left: 52px; }

.profile {
  width: 196px;
  height: 58px;
  margin-left: 19px;
  border: 2px solid #6e6e6e;
  border-radius: 14px;
  display: flex;
  align-items: center;
  padding-left: 14px;
  color: #e8e8e8;
  font-size: 25.5px;
  font-weight: 500;
}
.toolbar .profile-person { width: 22px; height: 24px; fill: currentColor; }
.profile span { margin-left: 11px; }
.toolbar .profile-caret { width: 14px; height: 9px; margin-left: 15px; color: #b0b0b0; }

.tb-back { width: 17px; height: 28px; margin-left: 39px; color: #b0b0b0; }
.tb-forward { width: 17px; height: 28px; margin-left: 55px; color: #b0b0b0; }

.urlbar {
  flex: none;
  width: 660px;
  height: 55px;
  margin-left: 58px;
  border: 2px solid #555;
  border-radius: 14px;
  display: grid;
  grid-template-columns: 1fr auto 1fr;
  align-items: center;
  padding: 0 12px 0 14px;
  color: #f0f0f0;
  font-size: 25.5px;
}
.url-page { width: 24px; height: 27px; color: #e0e0e0; }
.url-reload { width: 24px; height: 28px; justify-self: end; color: #e8e8e8; }
.url-text { white-space: nowrap; }
.url-secure { display: flex; align-items: center; gap: 12px; color: #9a9a9a; }
.url-lock { width: 20px; height: 28px; fill: #8f8f8f; color: #8f8f8f; }

.tb-download { width: 32px; height: 32px; margin-left: 65px; color: #c2c2c2; }
.tb-share { width: 24px; height: 38px; margin-left: 47px; color: #c2c2c2; }
.tb-plus { width: 26px; height: 26px; margin-left: 48px; color: #c2c2c2; }
.tb-tabs { width: 34px; height: 34px; margin-left: 46px; color: #c2c2c2; }

.toolbar-dim { background: #332a29; color: #7d7877; }
.toolbar-dim .profile { border-color: #706a69; color: #bdb9b8; }
.toolbar-dim .profile-caret { color: #8a8584; }
.toolbar-dim .urlbar { border-color: #433b3a; margin-left: 58px; width: 662px; }
.toolbar-dim .tb-back { color: #807b7a; }
.toolbar-dim .tb-disabled { color: #5d5756; }
.toolbar-dim .url-page { color: #d6d4d4; }
.toolbar-dim .url-reload { color: #d6d4d4; }
.toolbar-dim .tb-download { margin-left: 63px; }
.toolbar-dim .tb-download,
.toolbar-dim .tb-share,
.toolbar-dim .tb-plus,
.toolbar-dim .tb-tabs { color: #716b6a; }

/* ---------- tabs ---------- */
.tabs {
  flex: none;
  height: 56px;
  display: flex;
  font-size: 22px;
}
.tab {
  position: relative;
  display: flex;
  align-items: center;
  background: #1e1d1d;
  border-top: 2px solid #0c0c0c;
  color: #8c8c8c;
  white-space: nowrap;
}
.tab-title { margin-left: 10px; }
.tab-active {
  width: 549px;
  background: #3a3736;
  border-top: 0;
  color: #f2f2f2;
  padding-left: 154px;
}
.tab-close {
  position: absolute;
  left: 10px;
  top: 8px;
  color: #b5b5b5;
  font-size: 34px;
  line-height: 38px;
}
.tab-two {
  width: 554px;
  border-left: 2px solid #4a4a4a;
  padding-left: 46px;
  font-size: 21.8px;
}
.tab-three {
  flex: 1;
  border-left: 2px solid #4a4a4a;
  padding-left: 48px;
  font-size: 21.5px;
}
.favicon {
  flex: none;
  width: 32px;
  height: 32px;
  border-radius: 7px;
  background: #8e909e;
  color: #fff;
  font-size: 21px;
  display: flex;
  align-items: center;
  justify-content: center;
}
.parrot { width: 32px; height: 32px; flex: none; }

/* ---------- page content ---------- */
.content {
  flex: 1;
  min-height: 0;
  display: flex;
  background: #121212;
  border-top: 2px solid #0a0a0a;
  color: #e0e0e0;
}
.page-left {
  flex: 1;
  padding: 729px 0 0 527px;
}
.page-right {
  flex: 1;
  display: flex;
  flex-direction: column;
  align-items: center;
  padding-top: 721px;
}
.app-title {
  margin: 0;
  font-family: "Liberation Sans", Arial, sans-serif;
  font-size: 65px;
  line-height: 75px;
  font-weight: 700;
  letter-spacing: -.7px;
  color: #e0e0e0;
  white-space: nowrap;
}
.btn {
  display: block;
  height: 76px;
  padding: 0 30px;
  border: 0;
  border-radius: 12px;
  font-family: Inter, "Liberation Sans", sans-serif;
  font-size: 30px;
  color: #fff;
}
.btn-row { display: flex; gap: 20px; margin-top: 19px; }
.btn-blue { background: #3a7afe; width: 209px; }
.btn-green { background: #53a553; width: 164px; }
.btn-grey { background: #bfbfbf; color: #222; width: 210px; margin-top: 61px; }
.page-right .btn-green { margin-top: 20px; }

.log-card {
  width: 631px;
  height: 143px;
  margin-top: 30px;
  padding: 28px 30px;
  background: #1e1e1e;
  border: 2px solid #333;
  border-radius: 16px;
  color: #999;
  font-size: 37px;
  line-height: 48px;
}
.log-plain {
  width: 126px;
  height: 161px;
  margin-top: 20px;
  border: 2px solid #ccc;
  display: flex;
  align-items: center;
  justify-content: center;
  font-family: Inter, "Liberation Sans", sans-serif;
  font-size: 37px;
  font-weight: 700;
  color: #e0e0e0;
}

.scroller {
  flex: none;
  width: 30px;
  background: #1c1c1c;
  border-left: 2px solid #2c2c2c;
  padding: 6px 0 0 6px;
}
.thumb { display: block; width: 16px; border-radius: 8px; background: #9a9a9a; }
.scroller-left .thumb { height: 1666px; }
.scroller-right { background: #171717; padding-top: 4px; }
.scroller-right .thumb { height: 1725px; background: #4d4d4d; }

/* ---------- dock ---------- */
.dock {
  position: absolute;
  left: 55px;
  top: 2000px;
  width: 3249px;
  height: 90px;
  padding: 14px 0 0 5px;
  display: flex;
  z-index: 6;
  background: linear-gradient(90deg, #69221c, #6f221c 50%, #7c2722);
  border: 1px solid #8e4a44;
  border-radius: 22px;
}
.app {
  flex: none;
  width: 72.85px;
  display: flex;
  flex-direction: column;
  align-items: center;
  position: relative;
}
.ico { display: block; width: 56px; height: 56px; overflow: visible; flex: none; }
.dot {
  display: block;
  width: 6px;
  height: 8px;
  margin-top: 8px;
  border-radius: 50%;
  background: #eda39c;
}
.dock-sep { flex: none; width: 32px; position: relative; }
.dock-sep::after {
  content: "";
  position: absolute;
  left: 18px;
  top: 0;
  width: 2px;
  height: 66px;
  background: #a7625b;
}

.badge-text, .cal-month, .cal-day, .netflix, .beta, .a-mark,
.cmd, .x-mark, .wsf, .its, .tips-q { text-anchor: middle; }
.badge-text { font-size: 17px; fill: #fff; font-family: Inter, sans-serif; }
.cal-month { font-size: 13px; fill: #fff; font-family: Inter, sans-serif; font-weight: 500; }
.cal-day { font-size: 30px; fill: #222; font-family: Inter, sans-serif; font-weight: 300; }
.netflix { font-size: 60px; fill: #d6281f; font-family: "Liberation Sans", sans-serif; font-weight: 700; }
.beta { font-size: 12px; fill: #5ba0e0; font-family: "Liberation Sans", sans-serif; font-weight: 700; }
.a-mark { font-size: 64px; fill: #d9d9d9; font-family: "Liberation Sans", sans-serif; font-weight: 700; }
.cmd { font-size: 26px; fill: #eee; font-family: "DejaVu Sans", sans-serif; }
.x-mark { font-size: 48px; fill: #fff; font-family: "DejaVu Sans", sans-serif; font-weight: 700; }
.wsf { font-size: 21px; fill: #fff; font-family: "Liberation Serif", serif; font-style: italic; }
.its { font-size: 36px; fill: #fff; font-family: "Open Sans", sans-serif; font-weight: 300; }
.tips-q { font-size: 26px; fill: #fff; font-family: Inter, sans-serif; font-weight: 700; }
```
